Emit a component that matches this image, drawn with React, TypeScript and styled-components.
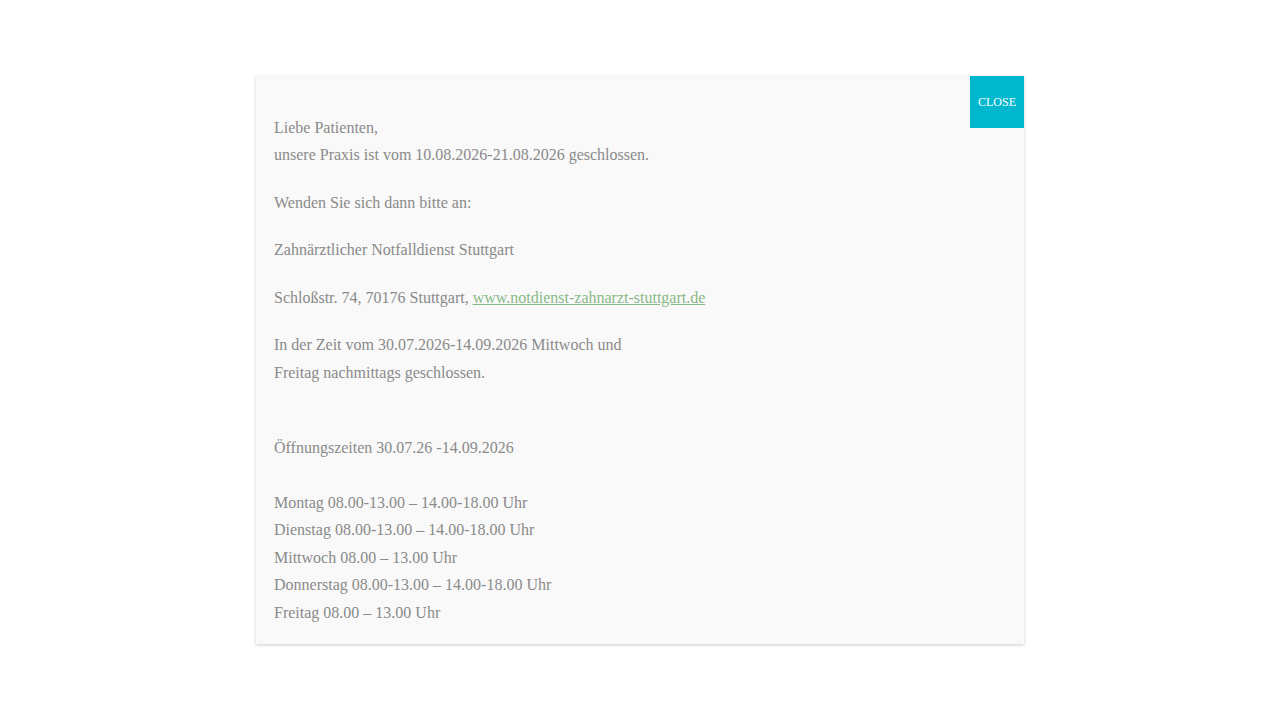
import React from "react";
import styled, { createGlobalStyle } from "styled-components";

const Global = createGlobalStyle`
  html, body { margin: 0; padding: 0; background: #ffffff; }
  body { font-family: "Liberation Serif", "Times New Roman", serif; }
`;

const Overlay = styled.div`
  min-height: 100vh;
  display: flex;
  align-items: center;
  justify-content: center;
`;

const Modal = styled.div`
  position: relative;
  width: 768px;
  box-sizing: border-box;
  background: #f9f9f9;
  box-shadow: 0 1px 3px rgba(0, 0, 0, 0.22);
  padding: 38px 18px 18px;
  color: #8a8a8a;
  font-size: 16px;
  line-height: 27.5px;
`;

const CloseButton = styled.button`
  position: absolute;
  top: 0;
  right: 0;
  width: 54px;
  height: 52px;
  border: none;
  background: #00b7cd;
  color: #ffffff;
  font-family: "Liberation Serif", "Times New Roman", serif;
  font-size: 12px;
  padding: 2px 0 0;
  cursor: pointer;
`;

const Para = styled.p<{ $gap?: number }>`
  margin: 0 0 ${(p) => (p.$gap ?? 20)}px;
  &:last-child { margin-bottom: 0; }
`;

const Link = styled.a`
  color: #88b987;
  text-decoration: underline;
`;

export default function App() {
  return (
    <>
      <Global />
      <Overlay>
        <Modal>
          <CloseButton>CLOSE</CloseButton>
          <Para>
            Liebe Patienten,
            <br />
            unsere Praxis ist vom 10.08.2026-21.08.2026 geschlossen.
          </Para>
          <Para>Wenden Sie sich dann bitte an:</Para>
          <Para>Zahnärztlicher Notfalldienst Stuttgart</Para>
          <Para>
            Schloßstr. 74, 70176 Stuttgart,{" "}
            <Link href="#">www.notdienst-zahnarzt-stuttgart.de</Link>
          </Para>
          <Para>
            In der Zeit vom 30.07.2026-14.09.2026 Mittwoch und
            <br />
            Freitag nachmittags geschlossen.
            <br />
            &nbsp;
          </Para>
          <Para>
            Öffnungszeiten 30.07.26 -14.09.2026
            <br />
            &nbsp;
            <br />
            Montag 08.00-13.00 – 14.00-18.00 Uhr
            <br />
            Dienstag 08.00-13.00 – 14.00-18.00 Uhr
            <br />
            Mittwoch 08.00 – 13.00 Uhr
            <br />
            Donnerstag 08.00-13.00 – 14.00-18.00 Uhr
            <br />
            Freitag 08.00 – 13.00 Uhr
          </Para>
        </Modal>
      </Overlay>
    </>
  );
}
